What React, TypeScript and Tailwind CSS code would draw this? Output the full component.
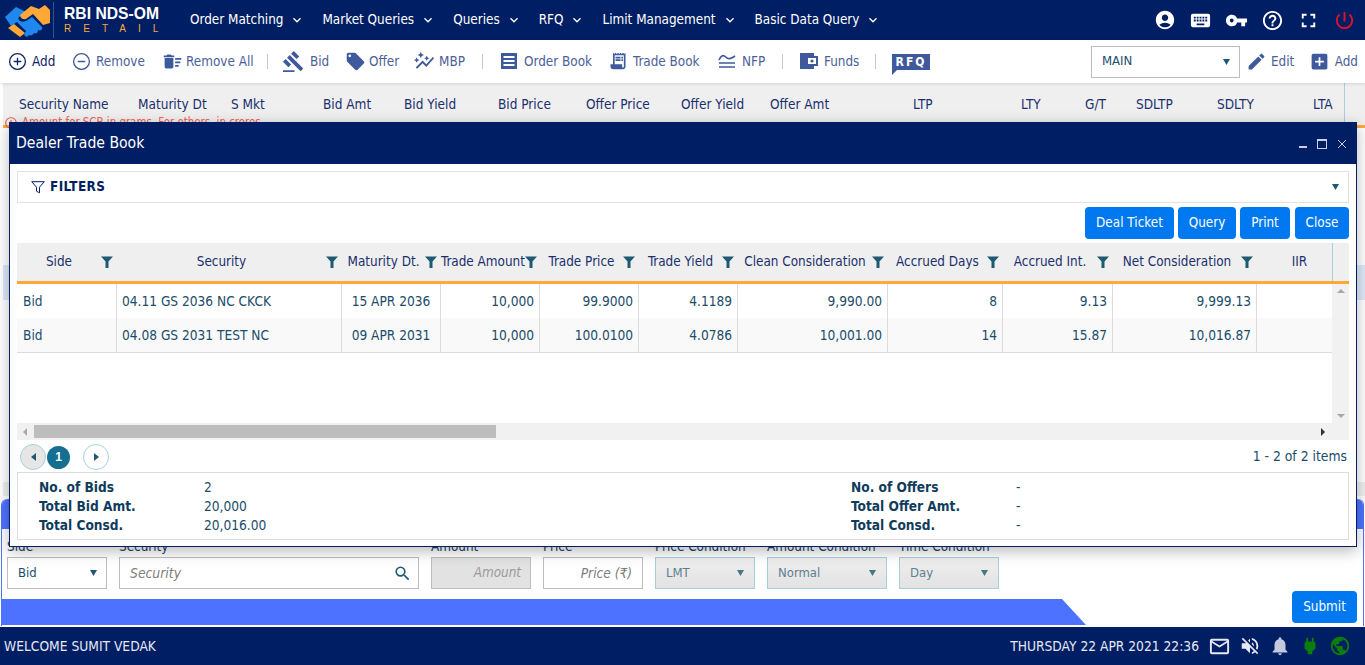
import type { ReactNode } from 'react'
import {
  MdAccountCircle,
  MdKeyboard,
  MdVpnKey,
  MdHelpOutline,
  MdFullscreen,
  MdPowerSettingsNew,
  MdDeleteSweep,
  MdGavel,
  MdLocalOffer,
  MdAutoGraph,
  MdReceiptLong,
  MdEdit,
  MdAddBox,
  MdSearch,
  MdMailOutline,
  MdVolumeOff,
  MdNotifications,
  MdPower,
  MdPublic,
  MdKeyboardArrowDown,
  MdErrorOutline,
} from 'react-icons/md'
import { IoAddCircleOutline, IoRemoveCircleOutline } from 'react-icons/io5'

const navItems = ['Order Matching', 'Market Queries', 'Queries', 'RFQ', 'Limit Management', 'Basic Data Query']

const gridCols = [
  ['Security Name', 'w-[119px]'],
  ['Maturity Dt', 'w-[93px]'],
  ['S Mkt', 'w-[92px]'],
  ['Bid Amt', 'w-[81px]'],
  ['Bid Yield', 'w-[94px]'],
  ['Bid Price', 'w-[88px]'],
  ['Offer Price', 'w-[95px]'],
  ['Offer Yield', 'w-[89px]'],
  ['Offer Amt', 'w-[143px]'],
  ['LTP', 'w-[108px]'],
  ['LTY', 'w-[64px]'],
  ['G/T', 'w-[51px]'],
  ['SDLTP', 'w-[81px]'],
  ['SDLTY', 'w-[96px]'],
  ['LTA', 'w-[31px]'],
]

const tradeCols = ['Side', 'Security', 'Maturity Dt.', 'Trade Amount', 'Trade Price', 'Trade Yield', 'Clean Consideration', 'Accrued Days', 'Accrued Int.', 'Net Consideration']

const rows = [
  ['Bid', '04.11 GS 2036 NC CKCK', '15 APR 2036', '10,000', '99.9000', '4.1189', '9,990.00', '8', '9.13', '9,999.13', ''],
  ['Bid', '04.08 GS 2031 TEST NC', '09 APR 2031', '10,000', '100.0100', '4.0786', '10,001.00', '14', '15.87', '10,016.87', ''],
]

const colsClass = 'grid grid-cols-[100px_225px_99px_99px_99px_99px_150px_115px_110px_144px_75px]'

function HandshakeLogo() {
  return (
    <svg width="48" height="36" viewBox="0 0 48 36" className="shrink-0">
      <path d="M2 15 L13 5 L23 10 L16 15 C14 18 18 21 23 19 L29 15 L39 25 C40 28 37 29 35 28 C35 31 33 32 31 31 C30 33 28 34 26 33 L24 35 L21 33 L23 29 L14 20 L8 24 Z" fill="#1e88f0" />
      <path d="M17 13 L28 4 L36 7 L42 3 L47 8 L47 21 L40 23 L30 12 L23 17 C20 18 17 16 17 13 Z" fill="#ffa838" />
      <path d="M5 26 L11 22 L22 31 L17 35 Z" fill="#ffa838" />
    </svg>
  )
}

function OrderBookIcon() {
  return (
    <svg width="18" height="18" viewBox="0 0 18 18" fill="#3f5a9c">
      <path d="M1 1h16v16H1z" />
      <path d="M3.5 4h11v2h-11zM3.5 8h11v2h-11zM3.5 12h11v2h-11z" fill="#fff" />
    </svg>
  )
}

function NfpIcon() {
  return (
    <svg width="18" height="18" viewBox="0 0 18 18" fill="none" stroke="#3f5a9c" strokeWidth="1.6">
      <path d="M1 8 C4 2 6 3 9 6 C12 8 14 6 17 4" />
      <path d="M1 11h16M1 15h16" />
    </svg>
  )
}

function FundsIcon() {
  return (
    <svg width="18" height="18" viewBox="0 0 18 18">
      <path d="M0 1h14v16H0z" fill="#3f5a9c" />
      <path d="M6 4h12v10H6z" fill="#3f5a9c" />
      <path d="M8 6h8v6H8z" fill="#fff" />
      <circle cx="12" cy="9" r="1.6" fill="#3f5a9c" />
    </svg>
  )
}

function FilterFill() {
  return (
    <svg width="12" height="12" viewBox="0 0 12 12" fill="#1f5a73" className="shrink-0">
      <path d="M0 0.5h12L7.5 5.5V12H4.5V5.5z" />
    </svg>
  )
}

function Caret({ className = '' }: { className?: string }) {
  return (
    <svg width="7" height="6" viewBox="0 0 7 6" fill="#1f5a73" className={className}>
      <path d="M0 0h7L3.5 6z" />
    </svg>
  )
}

function ToolItem({ icon, label, width, dark, iconWidth = 'w-[24px]' }: { icon: ReactNode; label: string; width: string; dark?: boolean; iconWidth?: string }) {
  return (
    <div className={`flex items-center ${width}`}>
      <span className={`${iconWidth} flex items-center`}>{icon}</span>
      <span className={`pt-[2px] ${dark ? 'text-[#0f2566]' : 'text-[#4c6199]'}`}>{label}</span>
    </div>
  )
}

function Sep({ className }: { className: string }) {
  return <span className={`h-[15px] w-px bg-[#c8c8c8] ${className}`} />
}

function Field({ label, width, children }: { label: string; width: string; children: ReactNode }) {
  return (
    <div className={`flex flex-col ${width}`}>
      <span className="h-[15px] leading-[10px] text-[#1a3f66]">{label}</span>
      {children}
    </div>
  )
}

function DisabledSelect({ value }: { value: string }) {
  return (
    <div className="h-[32px] flex items-center justify-between pl-[10px] pr-[10px] pb-[1px] border border-[#a8cfdc] bg-gradient-to-b from-[#efefef] to-[#e2e2e2] text-[13px] text-[#5d7f8f]">
      <span>{value}</span>
      <Caret className="opacity-80 mt-[1px]" />
    </div>
  )
}

export default function App() {
  return (
    <div className="relative h-[665px] w-[1365px] overflow-hidden bg-white flex flex-col font-['DejaVu_Sans_Condensed','DejaVu_Sans',sans-serif] text-[13.4px]">
      {/* top nav */}
      <header className="h-[40px] shrink-0 bg-[#001e64] flex items-center text-white">
        <div className="ml-[1px] w-[52px] flex justify-center"><HandshakeLogo /></div>
        <span className="h-[36px] w-px bg-[#33508f]" />
        <div className="ml-[10px] w-[126px] flex flex-col">
          <span className="font-['Liberation_Sans',sans-serif] font-bold text-[15.7px] leading-[17px]">RBI NDS-OM</span>
          <span className="font-['Liberation_Sans',sans-serif] text-[10px] leading-[13px] tracking-[12px] text-[#ffa838]">RETAIL</span>
        </div>
        <nav className="flex items-center gap-[17px]">
          {navItems.map(n => (
            <div key={n} className="flex items-center">
              <span>{n}</span>
              <MdKeyboardArrowDown className="ml-[6px] text-[16px]" />
            </div>
          ))}
        </nav>
        <div className="ml-auto mr-[9px] flex items-center gap-[13px]">
          <MdAccountCircle className="text-[22px]" />
          <MdKeyboard className="text-[23px]" />
          <MdVpnKey className="text-[23px]" />
          <MdHelpOutline className="text-[23px]" />
          <MdFullscreen className="text-[23px]" />
          <MdPowerSettingsNew className="text-[23px] text-[#e8112d]" />
        </div>
      </header>

      {/* toolbar */}
      <div className="h-[43px] shrink-0 bg-white flex items-center pl-[8px] relative z-10 shadow-[0_1px_3px_rgba(0,0,0,0.12)]">
        <ToolItem dark width="w-[64px]" label="Add" icon={<IoAddCircleOutline className="text-[21px] text-[#0f2566] -ml-[1px]" />} />
        <ToolItem width="w-[90px]" label="Remove" icon={<IoRemoveCircleOutline className="text-[21px] text-[#3f5a9c] -ml-[1px]" />} />
        <ToolItem width="w-[105px]" label="Remove All" icon={<MdDeleteSweep className="text-[21px] text-[#3f5a9c]" />} />
        <Sep className="mr-[16px]" />
        <ToolItem width="w-[61px]" iconWidth="w-[26px]" label="Bid" icon={<MdGavel className="text-[23px] text-[#3f5a9c] -ml-[2px]" />} />
        <ToolItem width="w-[68px]" label="Offer" icon={<MdLocalOffer className="text-[21px] text-[#3f5a9c]" />} />
        <ToolItem width="w-[69px]" iconWidth="w-[26px]" label="MBP" icon={<MdAutoGraph className="text-[22px] text-[#3f5a9c]" />} />
        <Sep className="mr-[17px]" />
        <ToolItem width="w-[109px]" label="Order Book" icon={<OrderBookIcon />} />
        <ToolItem width="w-[109px]" label="Trade Book" icon={<MdReceiptLong className="text-[20px] text-[#3f5a9c] -ml-[1px]" />} />
        <ToolItem width="w-[64px]" label="NFP" icon={<NfpIcon />} />
        <Sep className="mr-[17px]" />
        <ToolItem width="w-[75px]" label="Funds" icon={<FundsIcon />} />
        <Sep className="mr-[16px]" />
        <div className="relative h-[16px] w-[38px] bg-[#3f5a9c] text-white font-bold text-[12px] tracking-[2px] leading-[16px] text-center">
          RFQ
          <span className="absolute left-0 top-full w-0 h-0 border-t-[5px] border-t-[#3f5a9c] border-r-[5px] border-r-transparent" />
        </div>
        <div className="ml-[161px] h-[32px] w-[149px] border border-[#bdbdbd] flex items-center justify-between pl-[10px] pr-[9px] pb-[2px] text-[13px] text-[#1b4d6b]">
          <span>MAIN</span>
          <Caret className="mt-[2px]" />
        </div>
        <div className="ml-[7px]"><ToolItem width="w-[64px]" label="Edit" icon={<MdEdit className="text-[21px] text-[#3f5a9c] -ml-[1px]" />} /></div>
        <ToolItem width="w-[47px]" label="Add" icon={<MdAddBox className="text-[21px] text-[#3f5a9c] -ml-[2px]" />} />
      </div>

      {/* market grid behind the dialog */}
      <section className="relative flex-1 flex flex-col pl-[3px]">
        <div className="h-[42px] shrink-0 bg-[#efefef] flex items-center pl-[16px] text-[13.5px] text-[#1a2f6e]">
          {gridCols.map(([label, width]) => (
            <span key={label} className={`${width} shrink-0`}>{label}</span>
          ))}
          <span className="h-[42px] w-px bg-[#a8cfdc]" />
        </div>
        <div className="h-[3px] shrink-0 bg-[#ffa838]" />
        <div className="absolute left-[4px] top-[31px] flex items-center gap-[4px] text-[11.4px] text-[#f0605a]">
          <MdErrorOutline className="text-[14px]" />
          <span>Amount for SCB in grams. For others, in crores</span>
        </div>
        <div className="h-[137px] shrink-0" />
        <div className="h-[35px] shrink-0 bg-[#dfe9f7]" />
        <div className="flex-1" />
        <div className="h-[14px] shrink-0 bg-[#efefef]" />
        <div className="h-[3px] shrink-0" />
      </section>

      {/* order entry */}
      <section className="h-[127px] shrink-0 mx-[1px] border-x border-[#4d72ff] rounded-t-[6px] flex flex-col">
        <div className="h-[30px] shrink-0 bg-[#4d72ff] rounded-t-[6px]" />
        <div className="h-[70px] shrink-0 flex pt-[13px] pl-[5px] gap-[12px] items-start">
          <Field label="Side" width="w-[100px]">
            <div className="h-[32px] border border-[#bdbdbd] flex items-center justify-between pl-[10px] pr-[9px] pb-[1px] text-[13px] text-[#1b4d6b]">
              <span>Bid</span>
              <Caret className="mt-[1px]" />
            </div>
          </Field>
          <Field label="Security" width="w-[300px]">
            <div className="h-[32px] border border-[#bdbdbd] flex items-center justify-between pl-[10px] pr-[6px] italic text-[#7d7d7d] text-[13.8px]">
              <span>Security</span>
              <MdSearch className="text-[19px] text-[#1f5a73]" />
            </div>
          </Field>
          <Field label="Amount" width="w-[100px]">
            <div className="h-[32px] border border-[#bdbdbd] bg-[#e2e2e2] flex items-center justify-end pr-[9px] italic text-[#9a9a9a]">Amount</div>
          </Field>
          <Field label="Price" width="w-[100px]">
            <div className="h-[32px] border border-[#bdbdbd] flex items-center justify-end pr-[10px] italic text-[#7d7d7d] text-[13.6px]">Price (₹)</div>
          </Field>
          <Field label="Price Condition" width="w-[100px]"><DisabledSelect value="LMT" /></Field>
          <Field label="Amount Condition" width="w-[120px]"><DisabledSelect value="Normal" /></Field>
          <Field label="Time Condition" width="w-[100px]"><DisabledSelect value="Day" /></Field>
        </div>
        <div className="relative flex-1">
          <div className="h-[26px] w-[1084px] bg-[#4d72ff] [clip-path:polygon(0_0,1060px_0,100%_100%,0_100%)]" />
          <button className="absolute right-[6px] -top-[8px] h-[32px] w-[65px] rounded-[4px] bg-[#0078f0] text-white">Submit</button>
        </div>
      </section>

      {/* status bar */}
      <footer className="h-[38px] shrink-0 mt-[1px] bg-[#001e64] flex items-center pl-[4px] pr-[14px] text-[13.7px] text-[#e6e9f2]">
        <span>WELCOME SUMIT VEDAK</span>
        <span className="ml-auto mr-[9px]">THURSDAY 22 APR 2021 22:36</span>
        <div className="flex items-center gap-[8px]">
          <MdMailOutline className="text-[23px] text-[#e6e9f2]" />
          <MdVolumeOff className="text-[22px] text-[#e6e9f2]" />
          <MdNotifications className="text-[22px] text-[#c3cadd]" />
          <MdPower className="text-[22px] text-[#0a7d0a]" />
          <MdPublic className="text-[22px] text-[#0a7d0a]" />
        </div>
      </footer>

      {/* Dealer Trade Book window */}
      <div className="absolute left-[9px] top-[122px] z-20 h-[425px] w-[1348px] border border-[#001e64] bg-white flex flex-col shadow-[0_4px_14px_rgba(0,0,0,0.28)] text-[#1b4d6b]">
        <div className="h-[41px] shrink-0 bg-[#001e64] flex items-center pl-[6px] pr-[9px] text-white">
          <span className="text-[15.6px]">Dealer Trade Book</span>
          <div className="ml-auto flex items-center gap-[10px] text-[#c9d1e4]">
            <span className="h-[2px] w-[8px] bg-[#c9d1e4] mt-[6px] -ml-[1px]" />
            <span className="h-[10px] w-[10px] border border-[#c9d1e4] border-t-2" />
            <svg width="10" height="10" viewBox="0 0 10 10" stroke="#c9d1e4" strokeWidth="1"><path d="M1 1l8 8M9 1l-8 8" /></svg>
          </div>
        </div>

        <div className="flex-1 flex flex-col px-[7px] pt-[7px]">
          <div className="h-[32px] shrink-0 border border-[#e2e2e2] flex items-center pl-[13px] pr-[9px]">
            <svg width="14" height="13" viewBox="0 0 14 13" fill="none" stroke="#001e64" strokeWidth="1"><path d="M0.7 0.7h12.6L8.5 6.2v5.6l-3-1.6v-4z" /></svg>
            <span className="ml-[5px] font-bold text-[#001e64] tracking-[0.4px]">FILTERS</span>
            <Caret className="ml-auto" />
          </div>

          <div className="h-[40px] shrink-0 flex items-center justify-end gap-[4px]">
            <button className="h-[32px] w-[89px] rounded-[4px] bg-[#0078f0] text-white">Deal Ticket</button>
            <button className="h-[32px] w-[58px] rounded-[4px] bg-[#0078f0] text-white">Query</button>
            <button className="h-[32px] w-[50px] rounded-[4px] bg-[#0078f0] text-white mr-[1px]">Print</button>
            <button className="h-[32px] w-[54px] rounded-[4px] bg-[#0078f0] text-white">Close</button>
          </div>

          {/* table */}
          <div className="h-[197px] shrink-0 flex flex-col">
            <div className="h-[38px] shrink-0 bg-[#efefef] flex text-[#1a2f6e]">
              <div className={`${colsClass} w-[1315px] shrink-0`}>
                {tradeCols.map(c => (
                  <div key={c} className="flex items-center pr-[4px]">
                    <span className="flex-1 text-center whitespace-nowrap">{c}</span>
                    <FilterFill />
                  </div>
                ))}
                <div className="flex items-center justify-center pl-[10px]">IIR</div>
              </div>
              <span className="w-px bg-[#a8cfdc]" />
            </div>
            <div className="h-[3px] shrink-0 bg-[#ffa838]" />
            <div className="flex flex-1 min-h-0">
              <div className="w-[1315px] shrink-0 text-[13.6px]">
                {rows.map((r, i) => (
                  <div key={i} className={`${colsClass} ${i === 1 ? 'h-[35px] bg-[#f9f9f9] border-b border-[#dcdcdc]' : 'h-[34px]'}`}>
                    {r.map((v, j) => (
                      <div
                        key={j}
                        className={`flex items-center border-r border-[#dcdcdc] last:border-r-0 px-[5px] ${j === 2 ? 'justify-center' : j < 2 ? 'justify-start' : 'justify-end'} ${j === 0 ? 'pl-[6px]' : ''}`}
                      >
                        {v}
                      </div>
                    ))}
                  </div>
                ))}
              </div>
              <div className="flex-1 bg-[#f1f1f1] flex flex-col items-center justify-between pt-[5px] pb-[5px]">
                <span className="w-0 h-0 border-x-[4px] border-x-transparent border-b-[4px] border-b-[#a8a8a8]" />
                <span className="w-0 h-0 border-x-[4px] border-x-transparent border-t-[4px] border-t-[#a8a8a8]" />
              </div>
            </div>
            <div className="h-[17px] shrink-0 bg-[#f1f1f1] flex items-center">
              <span className="ml-[6px] w-0 h-0 border-y-[4px] border-y-transparent border-r-[4px] border-r-[#a8a8a8]" />
              <span className="ml-[7px] h-[13px] w-[462px] bg-[#bdbdbd]" />
              <span className="ml-auto mr-[24px] w-0 h-0 border-y-[4px] border-y-transparent border-l-[4px] border-l-[#303030]" />
            </div>
          </div>

          {/* pager */}
          <div className="h-[32px] shrink-0 flex items-center pl-[3px] pr-[2px] pt-[2px]">
            <span className="h-[26px] w-[26px] rounded-full border border-[#a8cfdc] bg-[#e6e6e6] flex items-center justify-center">
              <span className="w-0 h-0 border-y-[4px] border-y-transparent border-r-[5px] border-r-[#1f5a73]" />
            </span>
            <span className="h-[23px] w-[23px] ml-[1px] rounded-full bg-[#156f90] text-white font-['Liberation_Sans',sans-serif] font-bold text-[12px] flex items-center justify-center">1</span>
            <span className="ml-[13px] h-[26px] w-[26px] rounded-full border border-[#a8cfdc] flex items-center justify-center">
              <span className="w-0 h-0 border-y-[4px] border-y-transparent border-l-[5px] border-l-[#1f5a73]" />
            </span>
            <span className="ml-auto -mt-[2px] text-[13.8px]">1 - 2 of 2 items</span>
          </div>

          {/* totals */}
          <div className="h-[68px] shrink-0 border border-[#dcdcdc] flex pt-[5px] pl-[21px] text-[13.6px]">
            <dl className="w-[812px] grid grid-cols-[165px_1fr] auto-rows-[19px] items-center">
              <dt className="font-bold text-[#0f3c5c]">No. of Bids</dt><dd>2</dd>
              <dt className="font-bold text-[#0f3c5c]">Total Bid Amt.</dt><dd>20,000</dd>
              <dt className="font-bold text-[#0f3c5c]">Total Consd.</dt><dd>20,016.00</dd>
            </dl>
            <dl className="flex-1 grid grid-cols-[165px_1fr] auto-rows-[19px] items-center">
              <dt className="font-bold text-[#0f3c5c]">No. of Offers</dt><dd>-</dd>
              <dt className="font-bold text-[#0f3c5c]">Total Offer Amt.</dt><dd>-</dd>
              <dt className="font-bold text-[#0f3c5c]">Total Consd.</dt><dd>-</dd>
            </dl>
          </div>
        </div>
      </div>
    </div>
  )
}
